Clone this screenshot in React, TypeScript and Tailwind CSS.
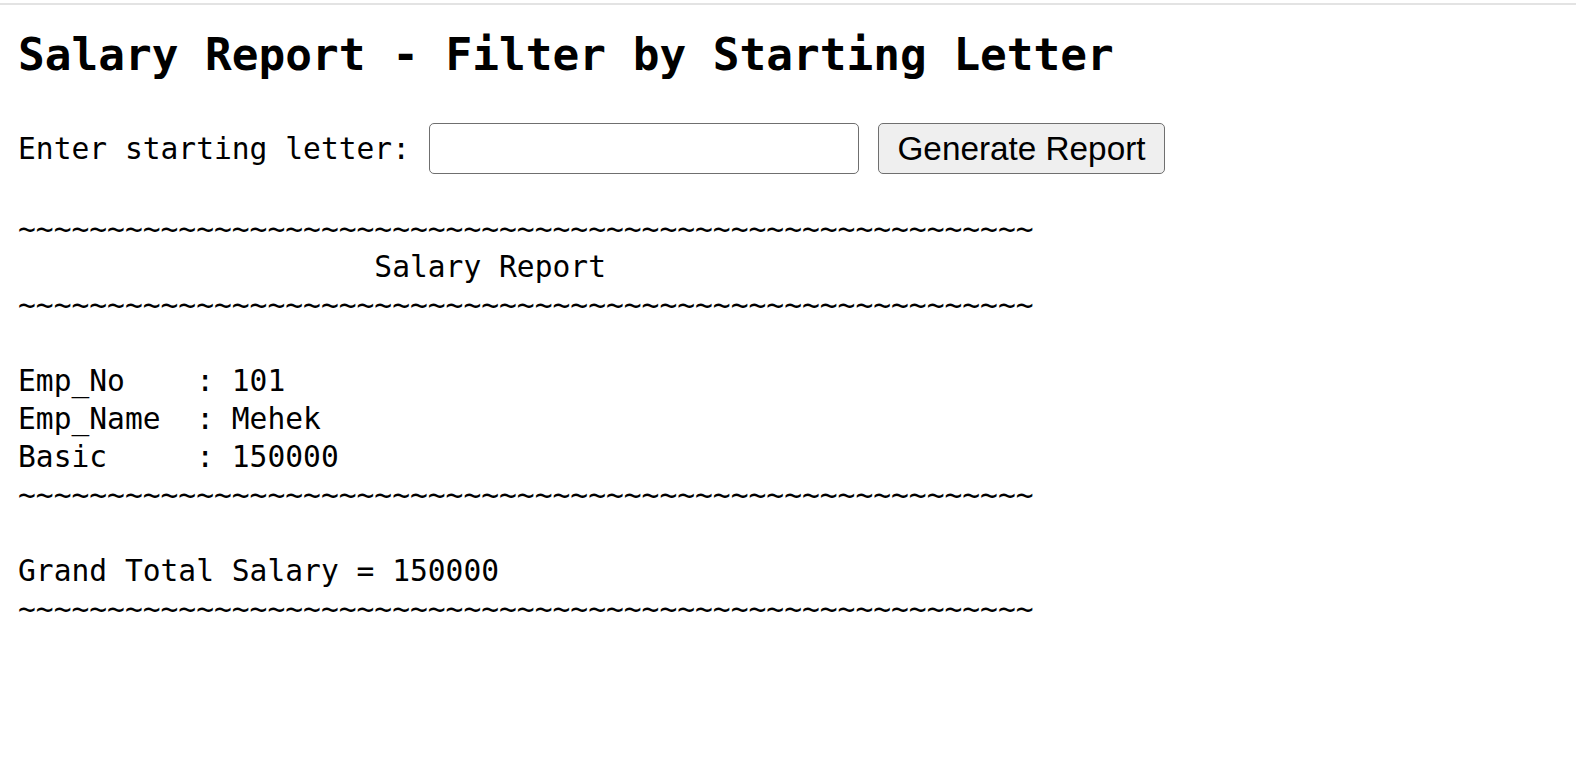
const RULE = "~".repeat(57);

const reportLines = [
  RULE,
  " ".repeat(20) + "Salary Report",
  RULE,
  "",
  "Emp_No    : 101",
  "Emp_Name  : Mehek",
  "Basic     : 150000",
  RULE,
  "",
  "Grand Total Salary = 150000",
  RULE,
];

export default function App() {
  return (
    <div className="min-h-screen bg-white text-black font-['DejaVu_Sans_Mono',monospace]">
      <div className="pt-[3px]">
        <div className="h-[2px] bg-[#e3e3e3]" />
      </div>
      <div className="px-[18px]">
        <h1 className="mt-[24px] text-[44.4px] leading-[52px] font-bold whitespace-pre">
          Salary Report - Filter by Starting Letter
        </h1>
        <div className="mt-[42px] flex items-center h-[51px]">
          <label className="text-[29.6px] leading-[51px] whitespace-pre mt-[1px]">
            Enter starting letter:
          </label>
          <input
            type="text"
            className="ml-[19px] w-[430px] h-[51px] border border-[#6f6f6f] rounded-[5px] bg-white outline-none px-[3px] text-[33px] font-['Liberation_Sans',Arial,sans-serif]"
          />
          <button
            type="button"
            className="ml-[19px] w-[287px] h-[51px] border border-[#6f6f6f] rounded-[5px] bg-[#efefef] text-[33.3px] leading-none font-['Liberation_Sans',Arial,sans-serif]"
          >
            Generate Report
          </button>
        </div>
        <pre className="mt-[36px] text-[29.6px] leading-[38px] font-['DejaVu_Sans_Mono',monospace]">
          {reportLines.join("\n")}
        </pre>
      </div>
    </div>
  );
}
